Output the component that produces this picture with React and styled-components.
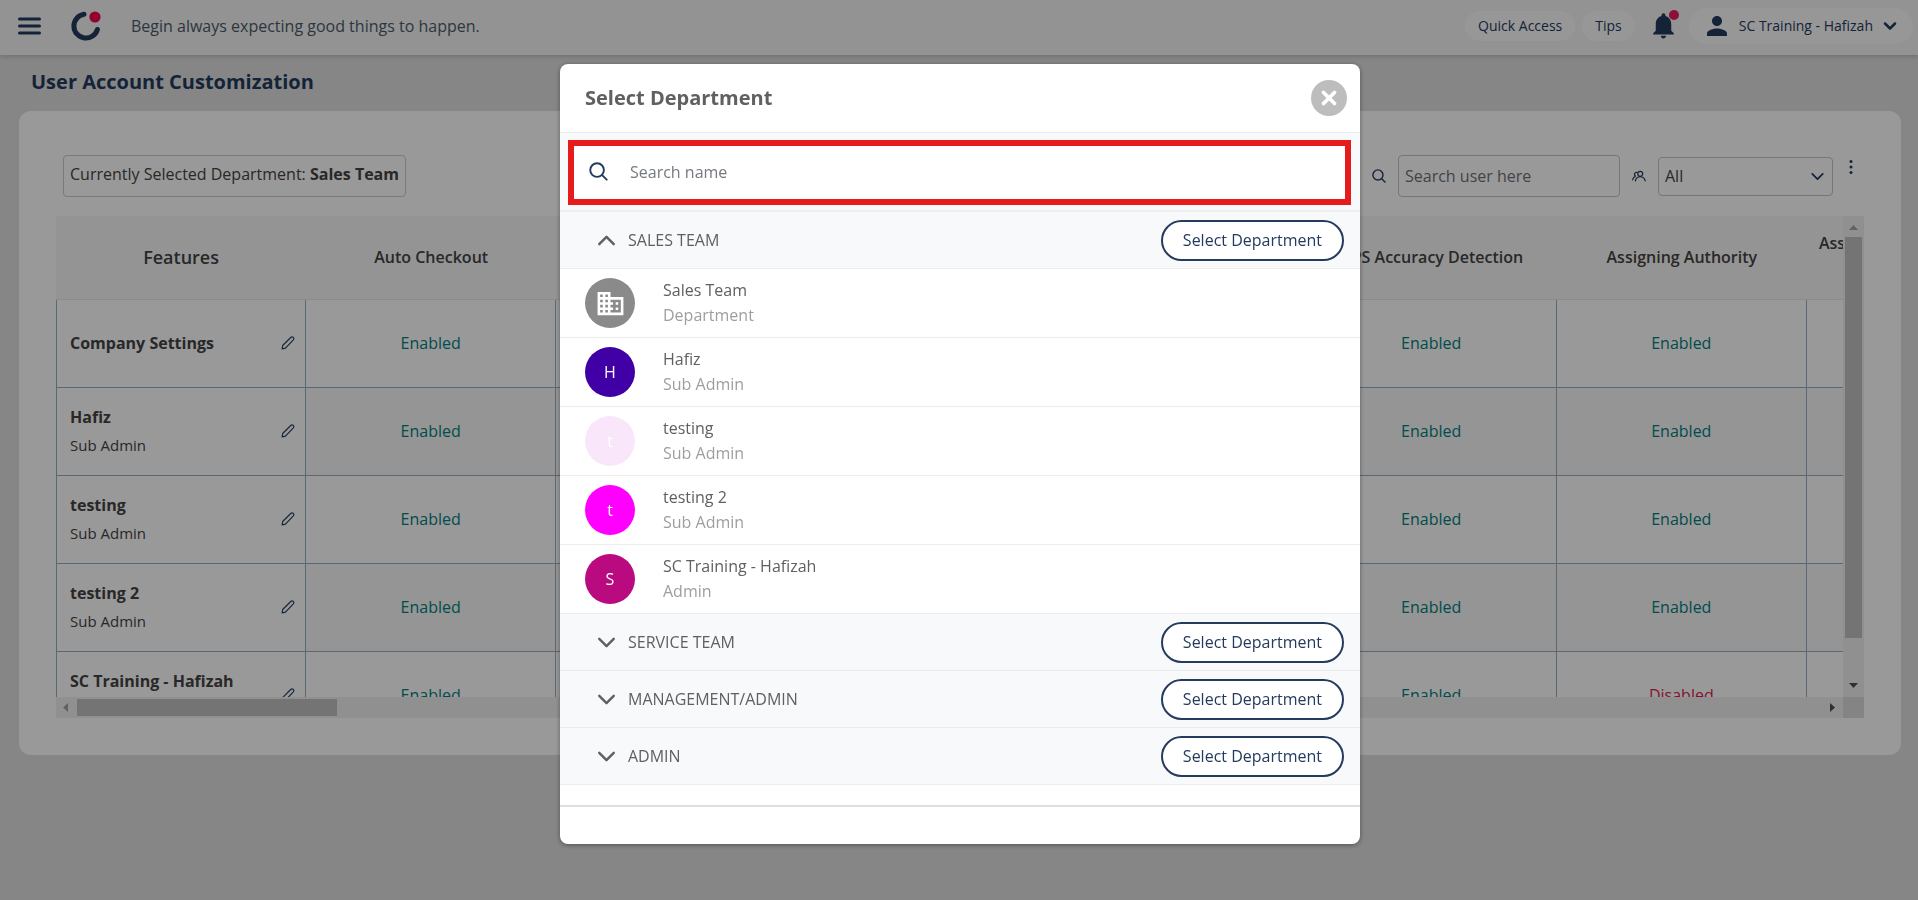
import React from 'react'
import styled, { createGlobalStyle } from 'styled-components'
import { ChevronDown, ChevronUp, X } from 'lucide-react'
import { MdBusiness, MdNotifications, MdPerson } from 'react-icons/md'

const GlobalStyle = createGlobalStyle`
  * {
    box-sizing: border-box;
  }
  body {
    margin: 0;
    background: #dfdfdf;
  }
  body, button, input, select {
    font-family: 'Open Sans', 'Noto Sans', sans-serif;
    font-size: 16px;
  }
  button {
    cursor: pointer;
  }
  svg {
    display: block;
    flex: none;
  }
`

const AppWrapper = styled.div`
  min-height: 100vh;
  color: #444;
`

/* top bar */
const Header = styled.header`
  display: flex;
  align-items: center;
  height: 55px;
  padding: 0 5px 4px 18px;
  background: #f5f5f5;
  box-shadow: 0 2px 4px rgba(0, 0, 0, 0.15);
`
const IconButton = styled.button`
  display: flex;
  padding: 0;
  border: 0;
  background: none;
  color: #243b5e;
`
const LogoLink = styled.a`
  margin: 0 29px 0 30px;
`
const Quote = styled.span`
  flex: 1;
  color: #4c5b6c;
`
const HeaderActions = styled.div`
  display: flex;
  align-items: center;
  gap: 7px;
`
const Pill = styled.button`
  height: 30px;
  padding: 0 13px;
  border: 0;
  border-radius: 15px;
  background: #fcfcfc;
  color: #243b5e;
  font-size: 14px;
`
const UserPill = styled(Pill)`
  display: flex;
  align-items: center;
  gap: 7px;
  height: 36px;
  border-radius: 18px;
`
const BellButton = styled(IconButton)`
  position: relative;
  margin: 0 3px 0 6px;
`
const BellDot = styled.span`
  position: absolute;
  top: 0;
  right: 0;
  width: 10px;
  height: 10px;
  border-radius: 50%;
  background: #e8195a;
`

/* page */
const PageTitle = styled.h1`
  margin: 0;
  padding: 13px 31px 15px;
  color: #243b5e;
  font-size: 20px;
  font-weight: 700;
  line-height: 28px;
`
const Card = styled.main`
  margin: 0 17px 0 19px;
  padding: 44px 37px 37px;
  border-radius: 12px;
  background: #fff;
`
const Toolbar = styled.div`
  display: flex;
  align-items: flex-start;
  padding: 0 11px 19px 7px;
`
const SelectedBox = styled.div`
  height: 42px;
  padding: 0 6px;
  border: 1px solid #ccc;
  border-radius: 4px;
  line-height: 36px;
`
const Filters = styled.div`
  display: flex;
  align-items: center;
  margin-left: auto;
  color: #243b5e;
`
const UserSearch = styled.input`
  width: 222px;
  height: 42px;
  margin: 0 12px;
  padding: 0 6px;
  border: 1px solid #c4c4cf;
  border-radius: 4px;
  background: none;
  &::placeholder {
    color: #6d7278;
  }
`
const SelectBox = styled.div`
  display: grid;
  align-items: center;
  margin: 0 16px 0 12px;
  > * {
    grid-area: 1 / 1;
  }
  svg {
    justify-self: end;
    margin-right: 5px;
    pointer-events: none;
  }
`
const RoleSelect = styled.select`
  width: 175px;
  height: 39px;
  padding: 0 6px;
  border: 1px solid #c4c4cf;
  border-radius: 4px;
  background: none;
  color: #444;
  appearance: none;
`
const MoreButton = styled(IconButton)`
  align-self: flex-start;
  padding: 4px 0;
`

/* table with its scroll bars */
const TableFrame = styled.div`
  display: grid;
  grid-template-columns: minmax(0, 1fr) 21px;
  grid-template-rows: 481px 21px;
`
const TableView = styled.div`
  overflow: hidden;
`
const Table = styled.table`
  width: 2001px;
  border-collapse: separate;
  border-spacing: 0;
  table-layout: fixed;
`
const Th = styled.th`
  height: 84px;
  padding: 0 12px 2px;
  border-bottom: 1px solid #e6e6e6;
  background: #f7f7f7;
  font-size: ${(p) => (p.$large ? 18 : 16)}px;
  font-weight: 600;
  text-align: ${(p) => (p.$wrap ? 'left' : 'center')};
  line-height: 28px;
`
const Td = styled.td`
  height: 88px;
  padding: 0 12px 1px;
  border-right: 1px solid #93b0c4;
  border-bottom: 1px solid #93b0c4;
  background: ${(p) => (p.$shade ? '#f9f9f9' : '#fff')};
  color: ${(p) => (p.$off ? '#e0184f' : '#008080')};
  text-align: center;
`
const FeatureCell = styled(Td).attrs({ as: 'th', scope: 'row' })`
  padding: 0 10px 1px 13px;
  border-left: 1px solid #93b0c4;
  color: #444;
  font-weight: 400;
`
const FeatureRow = styled.div`
  display: flex;
  align-items: center;
  justify-content: space-between;
  text-align: left;
`
const UserName = styled.div`
  font-weight: 700;
  line-height: 28px;
`
const UserRole = styled.div`
  font-size: 15px;
  line-height: 28px;
`
const ScrollBar = styled.div`
  display: flex;
  flex-direction: ${(p) => (p.$vertical ? 'column' : 'row')};
  align-items: center;
  justify-content: space-between;
  background: #f1f1f1;
`
const Thumb = styled.div`
  flex: 0 0 ${(p) => (p.$vertical ? '401px' : '260px')};
  width: ${(p) => (p.$vertical ? '17px' : 'auto')};
  height: ${(p) => (p.$vertical ? 'auto' : '17px')};
  margin: ${(p) => (p.$vertical ? '0 0 auto' : '0 auto 0 0')};
  background: #c1c1c1;
`
const Arrow = styled.svg`
  width: 21px;
  height: 21px;
  fill: ${(p) => (p.$dim ? '#a3a3a3' : '#505050')};
`
const Corner = styled.div`
  background: #dcdcdc;
`

/* dialog */
const Overlay = styled.div`
  position: fixed;
  inset: 0;
  display: flex;
  align-items: flex-start;
  justify-content: center;
  padding: 64px 0 0 2px;
  background: rgba(0, 0, 0, 0.4);
`
const Dialog = styled.section`
  width: 800px;
  max-width: 100%;
  border-radius: 8px;
  background: #fff;
  color: #606060;
  box-shadow: 0 1px 5px rgba(0, 0, 0, 0.4);
`
const DialogHeader = styled.div`
  display: flex;
  align-items: center;
  justify-content: space-between;
  height: 69px;
  padding: 0 13px 0 25px;
  border-bottom: 1px solid #ececec;
`
const DialogTitle = styled.h2`
  margin: 0;
  padding-bottom: 2px;
  font-size: 20px;
  font-weight: 700;
`
const CloseButton = styled.button`
  display: flex;
  align-items: center;
  justify-content: center;
  width: 36px;
  height: 36px;
  padding: 0;
  border: 0;
  border-radius: 50%;
  background: #bdbdbd;
  color: #fff;
`
const SearchArea = styled.div`
  padding: 7px 9px 5px 8px;
  border-bottom: 2px solid #eceef0;
  background: #f7f9fb;
`
const SearchField = styled.label`
  display: flex;
  align-items: center;
  gap: 22px;
  height: 65px;
  padding: 0 15px 2px;
  border: 6px solid #e61c1c;
  background: #fff;
  color: #243b5e;
`
const NameSearch = styled.input`
  flex: 1;
  padding: 0;
  border: 0;
  outline: 0;
  background: none;
  &::placeholder {
    color: #757a80;
  }
`
const GroupRow = styled.div`
  display: flex;
  align-items: center;
  justify-content: space-between;
  height: 57px;
  padding: 0 16px 0 32px;
  border-bottom: 1px solid #ececec;
  background: #f7f9fb;
`
const GroupToggle = styled.button`
  display: flex;
  align-items: center;
  gap: 7px;
  padding: 0;
  border: 0;
  background: none;
  color: #606060;
`
const SelectButton = styled.button`
  height: 41px;
  padding: 0 20px;
  border: 2px solid #243b5e;
  border-radius: 21px;
  background: #fff;
  color: #243b5e;
`
const MemberList = styled.ul`
  margin: 0;
  padding: 0;
  list-style: none;
`
const Member = styled.li`
  display: flex;
  align-items: center;
  gap: 28px;
  height: 69px;
  padding: 0 25px;
  border-bottom: 1px solid #ececec;
  line-height: 25px;
`
const Avatar = styled.span`
  display: flex;
  align-items: center;
  justify-content: center;
  width: 50px;
  height: 50px;
  border-radius: 50%;
  background: ${(p) => p.$color};
  color: #fff;
`
const MemberRole = styled.div`
  color: #9e9e9e;
`
const DialogFooter = styled.div`
  height: 39px;
  margin-top: 20px;
  border-top: 2px solid #dedede;
`

const users = [
  { name: 'Company Settings', status: 'Enabled' },
  { name: 'Hafiz', role: 'Sub Admin', status: 'Enabled' },
  { name: 'testing', role: 'Sub Admin', status: 'Enabled' },
  { name: 'testing 2', role: 'Sub Admin', status: 'Enabled' },
  { name: 'SC Training - Hafizah', role: 'Admin', status: 'Disabled' },
]

const members = [
  { name: 'Sales Team', role: 'Department', color: '#8a8a8a' },
  { name: 'Hafiz', role: 'Sub Admin', color: '#4000a5', letter: 'H' },
  { name: 'testing', role: 'Sub Admin', color: '#f9e6fb', letter: 't' },
  { name: 'testing 2', role: 'Sub Admin', color: '#ff00ff', letter: 't' },
  { name: 'SC Training - Hafizah', role: 'Admin', color: '#ba0a80', letter: 'S' },
]

const groups = ['SERVICE TEAM', 'MANAGEMENT/ADMIN', 'ADMIN']

const MenuIcon = () => (
  <svg width="23" height="18" viewBox="0 0 23 18" stroke="currentColor" strokeWidth="3" strokeLinecap="round">
    <path d="M1.5 2h20M1.5 9h20M1.5 16h20" />
  </svg>
)

const Logo = () => (
  <svg width="31" height="30" viewBox="0 0 31 30" fill="none">
    <path d="M13 3.2A12 12 0 1 0 26.4 18.5" stroke="#243b5e" strokeWidth="5" strokeLinecap="round" />
    <circle cx="24" cy="6" r="5.6" fill="#f0054c" />
  </svg>
)

const SearchIcon = ({ size, weight }) => (
  <svg width={size} height={size} viewBox="0 0 20 20" fill="none" stroke="currentColor" strokeWidth={weight} strokeLinecap="round">
    <circle cx="8.5" cy="8.5" r="7.2" />
    <path d="M13.8 13.8l4.8 4.8" />
  </svg>
)

const UsersIcon = () => (
  <svg width="14" height="12" viewBox="0 0 14 12" fill="none" stroke="currentColor" strokeWidth="1.2" strokeLinecap="round">
    <circle cx="8.2" cy="3.8" r="2.5" />
    <path d="M3.4 10.8c.9-5.4 8.7-5.4 9.8 0M5 2.4c-2.6-.4-3.4 2.4-1.6 3.6M3.4 6.2C1.8 6.8.9 8 .7 9.8" />
  </svg>
)

const PencilIcon = () => (
  <svg width="14" height="14" viewBox="0 0 15 15" fill="none" stroke="currentColor" strokeWidth="1.2" strokeLinejoin="round">
    <path d="M1.2 13.8l.6-3.6L10.4 1.6c2-1.7 4.3.5 2.8 2.6L4.8 13z" />
  </svg>
)

const DotsIcon = () => (
  <svg width="4" height="16" viewBox="0 0 4 16" fill="currentColor">
    <circle cx="2" cy="2.5" r="1.5" />
    <circle cx="2" cy="8" r="1.5" />
    <circle cx="2" cy="13.5" r="1.5" />
  </svg>
)

function FeaturesTable() {
  return (
    <TableFrame>
      <TableView>
        <Table>
          <thead>
            <tr>
              <Th $large>Features</Th>
              <Th>Auto Checkout</Th>
              <Th />
              <Th />
              <Th />
              <Th>GPS Accuracy Detection</Th>
              <Th>Assigning Authority</Th>
              <Th $wrap>Ass<br />&nbsp;</Th>
            </tr>
          </thead>
          <tbody>
            {users.map((user, i) => (
              <tr key={user.name}>
                <FeatureCell>
                  <FeatureRow>
                    <div>
                      <UserName>{user.name}</UserName>
                      {user.role && <UserRole>{user.role}</UserRole>}
                    </div>
                    <IconButton aria-label="Edit">
                      <PencilIcon />
                    </IconButton>
                  </FeatureRow>
                </FeatureCell>
                <Td $shade={i % 2}>Enabled</Td>
                <Td $shade={i % 2} />
                <Td $shade={i % 2} />
                <Td $shade={i % 2} />
                <Td $shade={i % 2}>Enabled</Td>
                <Td $shade={i % 2} $off={user.status === 'Disabled'}>{user.status}</Td>
                <Td $shade={i % 2} />
              </tr>
            ))}
          </tbody>
        </Table>
      </TableView>
      <ScrollBar $vertical>
        <Arrow $dim viewBox="0 0 21 21"><path d="M6 14l4.5-5 4.5 5z" /></Arrow>
        <Thumb $vertical />
        <Arrow viewBox="0 0 21 21"><path d="M6 7l4.5 5L15 7z" /></Arrow>
      </ScrollBar>
      <ScrollBar>
        <Arrow $dim viewBox="0 0 21 21"><path d="M12 6l-5 4.5 5 4.5z" /></Arrow>
        <Thumb />
        <Arrow viewBox="0 0 21 21"><path d="M8 6l5 4.5L8 15z" /></Arrow>
      </ScrollBar>
      <Corner />
    </TableFrame>
  )
}

function Group({ name, open }) {
  return (
    <GroupRow>
      <GroupToggle aria-expanded={!!open}>
        {open ? <ChevronUp size={29} /> : <ChevronDown size={29} />}
        {name}
      </GroupToggle>
      <SelectButton>Select Department</SelectButton>
    </GroupRow>
  )
}

function DepartmentDialog() {
  return (
    <Overlay>
      <Dialog role="dialog" aria-labelledby="dialog-title">
        <DialogHeader>
          <DialogTitle id="dialog-title">Select Department</DialogTitle>
          <CloseButton aria-label="Close">
            <X size={22} strokeWidth={4} />
          </CloseButton>
        </DialogHeader>
        <SearchArea>
          <SearchField>
            <SearchIcon size={19} weight={2} />
            <NameSearch type="text" placeholder="Search name" aria-label="Search name" />
          </SearchField>
        </SearchArea>
        <Group name="SALES TEAM" open />
        <MemberList>
          {members.map((m) => (
            <Member key={m.name}>
              <Avatar $color={m.color}>{m.letter || <MdBusiness size={31} />}</Avatar>
              <div>
                <div>{m.name}</div>
                <MemberRole>{m.role}</MemberRole>
              </div>
            </Member>
          ))}
        </MemberList>
        {groups.map((name) => (
          <Group key={name} name={name} />
        ))}
        <DialogFooter />
      </Dialog>
    </Overlay>
  )
}

export default function App() {
  return (
    <AppWrapper>
      <GlobalStyle />
      <Header>
        <IconButton aria-label="Menu">
          <MenuIcon />
        </IconButton>
        <LogoLink href="#" aria-label="Home">
          <Logo />
        </LogoLink>
        <Quote>Begin always expecting good things to happen.</Quote>
        <HeaderActions>
          <Pill>Quick Access</Pill>
          <Pill>Tips</Pill>
          <BellButton aria-label="Notifications">
            <MdNotifications size={31} />
            <BellDot />
          </BellButton>
          <UserPill>
            <MdPerson size={30} />
            SC Training - Hafizah
            <ChevronDown size={20} strokeWidth={3} />
          </UserPill>
        </HeaderActions>
      </Header>
      <PageTitle>User Account Customization</PageTitle>
      <Card>
        <Toolbar>
          <SelectedBox>
            Currently Selected Department: <b>Sales Team</b>
          </SelectedBox>
          <Filters>
            <SearchIcon size={14} weight={2} />
            <UserSearch type="text" placeholder="Search user here" aria-label="Search user" />
            <UsersIcon />
            <SelectBox>
              <RoleSelect aria-label="Role">
                <option>All</option>
              </RoleSelect>
              <ChevronDown size={21} />
            </SelectBox>
            <MoreButton aria-label="More">
              <DotsIcon />
            </MoreButton>
          </Filters>
        </Toolbar>
        <FeaturesTable />
      </Card>
      <DepartmentDialog />
    </AppWrapper>
  )
}
